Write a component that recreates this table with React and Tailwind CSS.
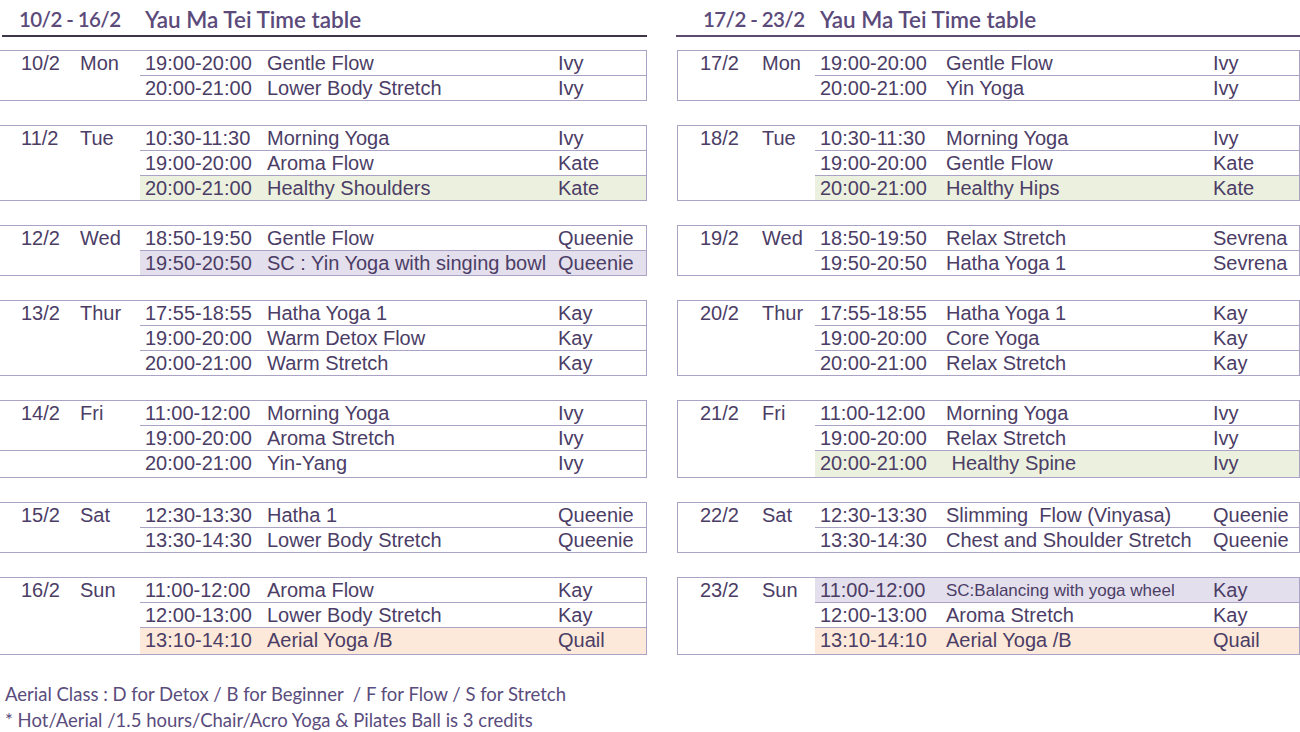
const GREEN = 'bg-[#ebf1de]'
const LAV = 'bg-[#e4dfec]'
const PEACH = 'bg-[#fde9d9]'

const leftWeek = [
  { date: '10/2', day: 'Mon', rows: [
    ['19:00-20:00', 'Gentle Flow', 'Ivy'],
    ['20:00-21:00', 'Lower Body Stretch', 'Ivy'],
  ] },
  { date: '11/2', day: 'Tue', rows: [
    ['10:30-11:30', 'Morning Yoga', 'Ivy'],
    ['19:00-20:00', 'Aroma Flow', 'Kate'],
    ['20:00-21:00', 'Healthy Shoulders', 'Kate', GREEN],
  ] },
  { date: '12/2', day: 'Wed', rows: [
    ['18:50-19:50', 'Gentle Flow', 'Queenie'],
    ['19:50-20:50', 'SC : Yin Yoga with singing bowl', 'Queenie', LAV],
  ] },
  { date: '13/2', day: 'Thur', rows: [
    ['17:55-18:55', 'Hatha Yoga 1', 'Kay'],
    ['19:00-20:00', 'Warm Detox Flow', 'Kay'],
    ['20:00-21:00', 'Warm Stretch', 'Kay'],
  ] },
  { date: '14/2', day: 'Fri', full: 2, tall: 2, rows: [
    ['11:00-12:00', 'Morning Yoga', 'Ivy'],
    ['19:00-20:00', 'Aroma Stretch', 'Ivy'],
    ['20:00-21:00', 'Yin-Yang', 'Ivy'],
  ] },
  { date: '15/2', day: 'Sat', rows: [
    ['12:30-13:30', 'Hatha 1', 'Queenie'],
    ['13:30-14:30', 'Lower Body Stretch', 'Queenie'],
  ] },
  { date: '16/2', day: 'Sun', tall: 2, rows: [
    ['11:00-12:00', 'Aroma Flow', 'Kay'],
    ['12:00-13:00', 'Lower Body Stretch', 'Kay'],
    ['13:10-14:10', 'Aerial Yoga /B', 'Quail', PEACH],
  ] },
]

const rightWeek = [
  { date: '17/2', day: 'Mon', rows: [
    ['19:00-20:00', 'Gentle Flow', 'Ivy'],
    ['20:00-21:00', 'Yin Yoga', 'Ivy'],
  ] },
  { date: '18/2', day: 'Tue', rows: [
    ['10:30-11:30', 'Morning Yoga', 'Ivy'],
    ['19:00-20:00', 'Gentle Flow', 'Kate'],
    ['20:00-21:00', 'Healthy Hips', 'Kate', GREEN],
  ] },
  { date: '19/2', day: 'Wed', rows: [
    ['18:50-19:50', 'Relax Stretch', 'Sevrena'],
    ['19:50-20:50', 'Hatha Yoga 1', 'Sevrena'],
  ] },
  { date: '20/2', day: 'Thur', rows: [
    ['17:55-18:55', 'Hatha Yoga 1', 'Kay'],
    ['19:00-20:00', 'Core Yoga', 'Kay'],
    ['20:00-21:00', 'Relax Stretch', 'Kay'],
  ] },
  { date: '21/2', day: 'Fri', tall: 2, rows: [
    ['11:00-12:00', 'Morning Yoga', 'Ivy'],
    ['19:00-20:00', 'Relax Stretch', 'Ivy'],
    ['20:00-21:00', '\u00a0Healthy Spine', 'Ivy', GREEN],
  ] },
  { date: '22/2', day: 'Sat', rows: [
    ['12:30-13:30', 'Slimming\u00a0 Flow (Vinyasa)', 'Queenie'],
    ['13:30-14:30', 'Chest and Shoulder Stretch', 'Queenie'],
  ] },
  { date: '23/2', day: 'Sun', tall: 2, rows: [
    ['11:00-12:00', 'SC:Balancing with yoga wheel', 'Kay', LAV, true],
    ['12:00-13:00', 'Aroma Stretch', 'Kay'],
    ['13:10-14:10', 'Aerial Yoga /B', 'Quail', PEACH],
  ] },
]

function Group({ g, side }) {
  const left = side === 'left'
  return (
    <div
      className={
        'border-b border-r border-[#aaa3c6] ' +
        (left ? 'w-[647px] ' : 'border-l ml-[1px] ')
      }
    >
      {g.rows.map(([time, name, who, bg, small], i) => {
        const h = g.tall === i ? 'h-[27px]' : 'h-[25px]'
        const rowLine = i === 0 || g.full === i
        return (
          <div key={i} className={'flex ' + h + (rowLine ? ' border-t border-[#aaa3c6]' : '')}>
            <div className={'flex shrink-0 ' + (left ? 'w-[140px]' : 'w-[137px]')}>
              {i === 0 && (
                <>
                  <span className={'shrink-0 ' + (left ? 'w-[80px] pl-[21px]' : 'w-[84px] pl-[22px]')}>{g.date}</span>
                  <span>{g.day}</span>
                </>
              )}
            </div>
            <div
              className={
                'flex flex-1 ' +
                (bg || '') +
                (!rowLine ? ' border-t border-[#aaa3c6]' : '')
              }
            >
              <span className={'pl-[5px] shrink-0 ' + (left ? 'w-[127px]' : 'w-[131px]')}>{time}</span>
              <span className={'shrink-0 whitespace-nowrap ' + (left ? 'w-[291px]' : 'w-[267px]') + (small ? ' text-[17px]' : '')}>
                {name}
              </span>
              <span>{who}</span>
            </div>
          </div>
        )
      })}
    </div>
  )
}

function Week({ range, data, side }) {
  const left = side === 'left'
  return (
    <div className={left ? 'w-[647px] shrink-0' : 'flex-1'}>
      <div
        className={
          'flex h-[35px] items-center pt-[3px] font-semibold text-[#5b4a7a] ' +
          (left ? 'pl-[19px]' : 'pl-[27px]')
        }
        style={{ fontFamily: 'Lato, "Noto Sans", sans-serif' }}
      >
        <span className={'text-[20.5px] tracking-[-0.6px] shrink-0 ' + (left ? 'w-[126px]' : 'w-[117px]')}>{range}</span>
        <span className="text-[22.5px]">Yau Ma Tei Time table</span>
      </div>
      <div className={'h-[2px] ' + (left ? 'ml-[2px] bg-[#3d3548]' : 'bg-[#5c4b6e]')} />
      <div className="mt-[13px] flex flex-col gap-[24px]">
        {data.map((g) => (
          <Group key={g.date} g={g} side={side} />
        ))}
      </div>
    </div>
  )
}

export default function App() {
  return (
    <div className="w-[1300px] h-[732px] bg-white overflow-hidden text-[#4b3d66]">
      <div
        className="flex gap-[29px] text-[20px] leading-[25px]"
        style={{ fontFamily: '"Liberation Sans", Arial, sans-serif' }}
      >
        <Week range="10/2 - 16/2" data={leftWeek} side="left" />
        <Week range="17/2 - 23/2" data={rightWeek} side="right" />
      </div>
      <div
        className="mt-[26px] pl-[5px] text-[18.5px] leading-[26px] text-[#5a4c7c]"
        style={{ fontFamily: 'Lato, "Open Sans", sans-serif' }}
      >
        <p>Aerial Class : D for Detox / B for Beginner&nbsp; / F for Flow / S for Stretch</p>
        <p>* Hot/Aerial /1.5 hours/Chair/Acro Yoga &amp; Pilates Ball is 3 credits</p>
      </div>
    </div>
  )
}
